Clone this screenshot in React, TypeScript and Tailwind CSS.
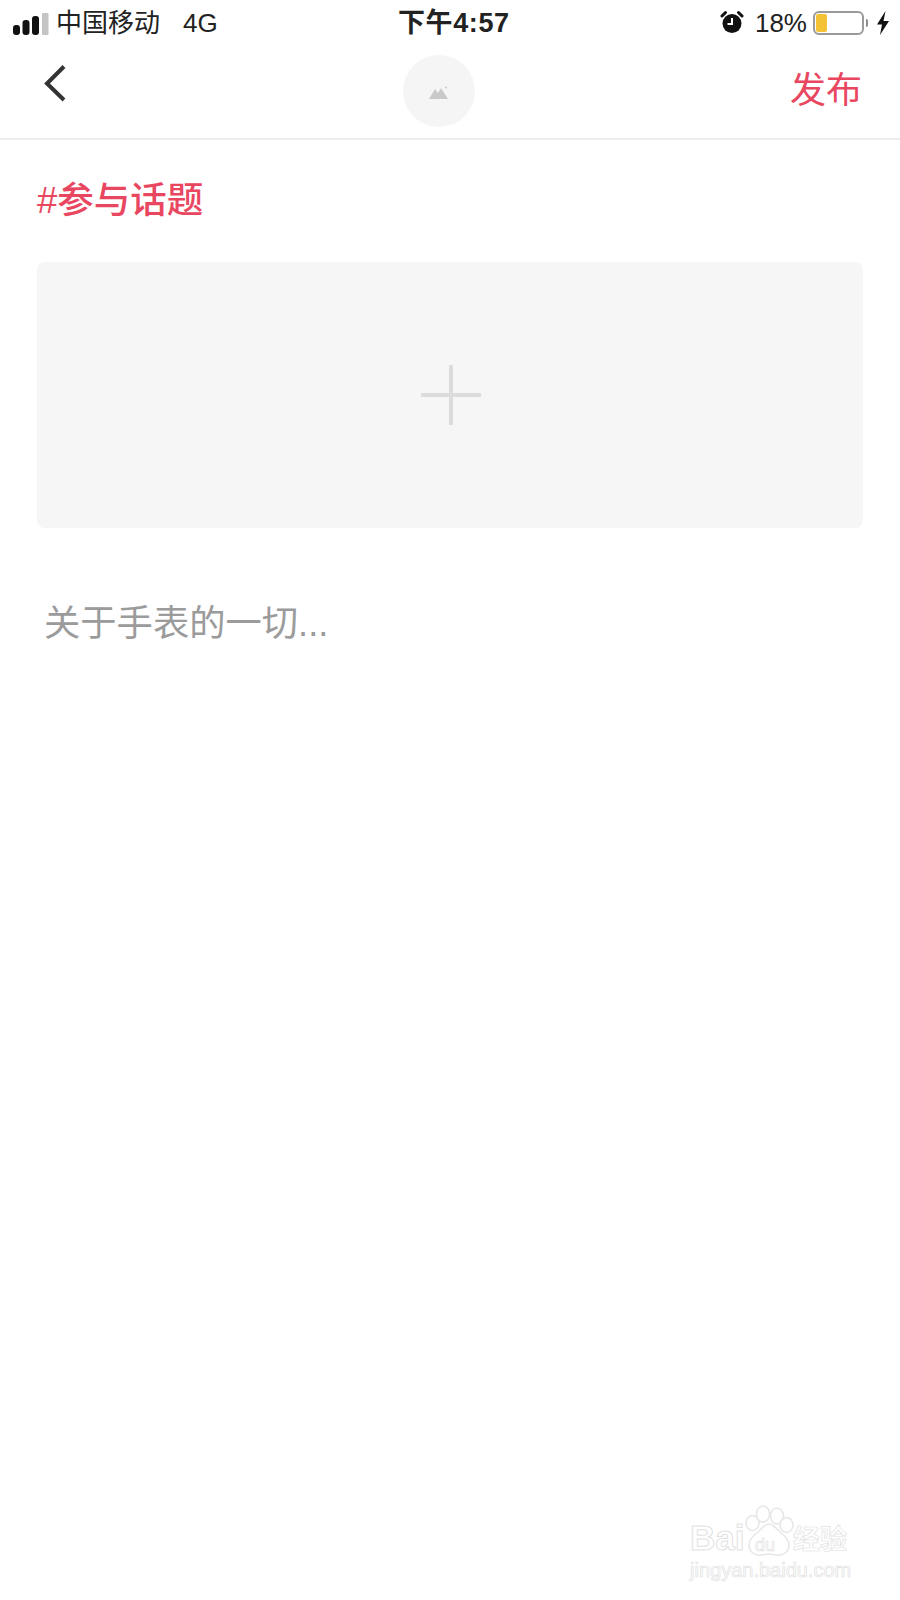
export default function App() {
  return (
    <div className="relative w-[900px] h-[1600px] bg-white overflow-hidden font-['Liberation_Sans','Noto_Sans_CJK_SC',sans-serif]">
      {/* status bar */}
      <div className="relative flex items-center h-[46px] pl-[13px] pr-[10px] text-[#222]">
        <svg width="36" height="22" viewBox="0 0 36 22" className="mt-[1px]">
          <rect x="0" y="12" width="7" height="10" rx="3" fill="#111" />
          <rect x="9.5" y="7" width="7" height="15" rx="3" fill="#111" />
          <rect x="19" y="3" width="7" height="19" rx="3" fill="#111" />
          <rect x="29" y="0" width="6.5" height="22" rx="1" fill="#c4c4c4" />
        </svg>
        <span className="ml-[7px] text-[26px] leading-none">中国移动</span>
        <span className="ml-[23px] text-[26px] leading-none">4G</span>
        <span className="absolute left-[398px] top-[9px] text-[27px] leading-[28px] font-semibold tracking-[0.6px]">下午4:57</span>
        <div className="ml-auto flex items-center">
          <svg width="24" height="24" viewBox="0 0 24 24" className="mr-[11px] -mt-[2px]">
            <circle cx="12" cy="13.5" r="9.5" fill="#111" />
            <path d="M12 8v6H7.5" fill="none" stroke="#fff" strokeWidth="2" />
            <path d="M2 6 5.5 2.5M22 6 18.5 2.5" stroke="#111" strokeWidth="3" strokeLinecap="round" />
          </svg>
          <span className="text-[26px] leading-none">18%</span>
          <div className="ml-[6px] flex items-center">
            <div className="w-[51px] h-[24px] rounded-[6px] border-2 border-[#9a9a9a] p-[1px] bg-white">
              <div className="w-[11px] h-full rounded-[2px] bg-[#f3c335]" />
            </div>
            <div className="ml-[2px] w-[2px] h-[8px] rounded-r-full bg-[#8a8a8a]" />
          </div>
          <svg width="14" height="24" viewBox="0 0 14 24" className="ml-[8px]">
            <path d="M9.5 0 1 13.5h5L4 24l9-14H7.5Z" fill="#111" />
          </svg>
        </div>
      </div>

      {/* nav */}
      <div className="relative flex items-center justify-between h-[94px] border-b-2 border-[#ececec] pl-[43px] pr-[38px]">
        <svg width="24" height="38" viewBox="0 0 24 38" className="-mt-[19px]">
          <path d="M21 2.5 4 19.5 21 36" fill="none" stroke="#333" strokeWidth="4" />
        </svg>
        <div className="absolute left-[403px] top-[9px] w-[72px] h-[72px] rounded-full bg-[#f5f5f5] flex items-center justify-center">
          <svg width="20" height="13" viewBox="0 0 20 13" className="mt-[2px]">
            <path d="M0 13 6 3l3 4 3-5 7 11Z" fill="#c9c9c9" />
            <circle cx="17" cy="1.5" r="1" fill="#c9c9c9" />
          </svg>
        </div>
        <span className="text-[36px] leading-none text-[#e8475f] -mt-[2px]">发布</span>
      </div>

      {/* content */}
      <div className="px-[37px] pt-[43px]">
        <div className="text-[36.5px] leading-[36px] font-medium text-[#e8475f]">#参与话题</div>
        <div className="mt-[43px] h-[266px] rounded-[8px] bg-[#f6f6f6] flex items-center justify-center">
          <svg width="60" height="60" viewBox="0 0 60 60" className="ml-[1px]">
            <rect x="0" y="28" width="60" height="4" fill="#dcdcdc" />
            <rect x="28" y="0" width="4" height="60" fill="#dcdcdc" />
          </svg>
        </div>
        <div className="mt-[75px] pl-[7px] text-[36.3px] leading-[42px] text-[#9b9b9b]">关于手表的一切...</div>
      </div>

      {/* watermark */}
      <div className="absolute left-[690px] top-[1510px] w-[165px] h-[72px]">
        <svg width="50" height="52" viewBox="0 0 50 52" className="absolute left-[55px] -top-[5px]" fill="#fff" stroke="#e6e6e6" strokeWidth="1.5">
          <ellipse cx="7.5" cy="18" rx="6.5" ry="7.5" />
          <ellipse cx="18" cy="9" rx="6.5" ry="8" />
          <ellipse cx="32" cy="11" rx="6.5" ry="8" />
          <ellipse cx="41.5" cy="20" rx="6.5" ry="7.5" />
          <path d="M24 19c5 0 7 5 11 8 4 3 9 7 9 13 0 7-6 11-12 10-3-.5-5-1-8-1s-5 .5-8 1c-6 1-12-3-12-10 0-6 5-10 9-13s6-8 11-8Z" />
        </svg>
        <span className="absolute left-0 top-[10px] text-[35px] leading-none font-bold text-white [-webkit-text-stroke:1px_#e2e2e2]">Bai</span>
        <span className="absolute left-[65px] top-[26px] text-[18px] leading-none text-white [-webkit-text-stroke:0.7px_#e2e2e2]">du</span>
        <span className="absolute left-[103px] top-[17px] text-[27px] leading-none font-bold text-white [-webkit-text-stroke:0.7px_#e2e2e2]">经验</span>
        <span className="absolute left-0 top-[50px] text-[20px] leading-none text-white [-webkit-text-stroke:0.7px_#e2e2e2]">jingyan.baidu.com</span>
      </div>
    </div>
  );
}
